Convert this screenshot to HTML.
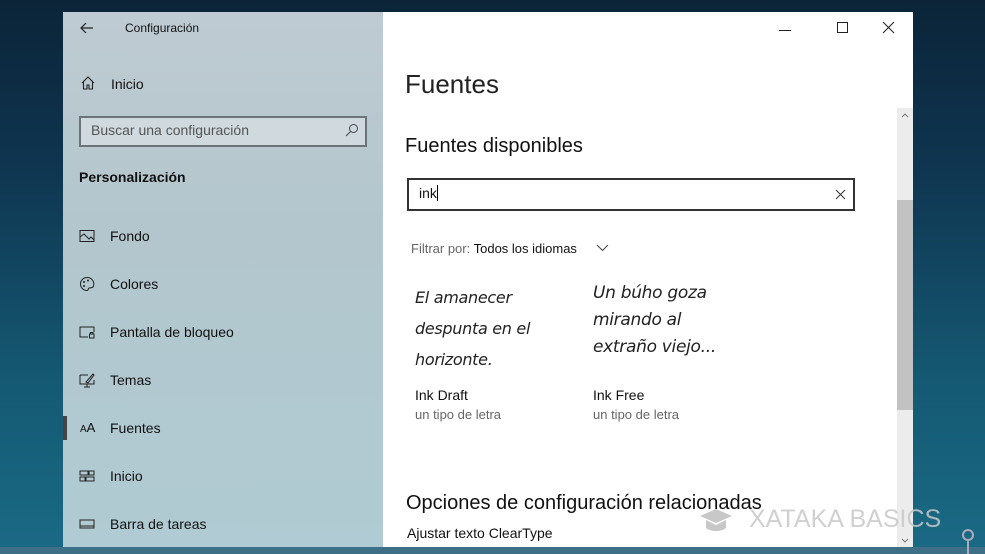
<!DOCTYPE html>
<html><head><meta charset="utf-8"><style>
*{margin:0;padding:0;box-sizing:border-box}
html,body{width:985px;height:554px;overflow:hidden}
body{position:relative;font-family:"Liberation Sans",sans-serif;
background:linear-gradient(180deg,#0b2438 0%,#0f3550 30%,#155a74 70%,#1a6a85 100%);}
.win{position:absolute;left:63px;top:12px;width:850px;height:535px;}
.left{position:absolute;left:0;top:0;width:320px;height:535px;background:linear-gradient(180deg,#bfcbd2 0%,#b3c6cd 40%,#b0cbd3 100%);color:#111}
.right{position:absolute;left:320px;top:0;width:530px;height:535px;background:#fff;color:#111}
.t{position:absolute;white-space:nowrap}
.nav{position:absolute;left:16px;font-size:14px;white-space:nowrap}
.nav svg{position:absolute;left:0;top:0}
.nav span{position:absolute;left:31px;top:0px;white-space:nowrap}
.hw{font-family:"DejaVu Sans",sans-serif;font-style:italic;font-size:16px;line-height:31px;color:#222;letter-spacing:-0.3px}
</style></head><body>
<div class="win">
 <div class="left">
  <svg class="t" style="left:16px;top:8px" width="16" height="16" viewBox="0 0 16 16"><path d="M14 8H2M7 3L2 8l5 5" stroke="#222" stroke-width="1.2" fill="none"/></svg>
  <div class="t" style="left:62px;top:9px;font-size:12px">Configuración</div>
  <svg class="t" style="left:17px;top:63px" width="16" height="16" viewBox="0 0 16 16"><path d="M2 8L8 2l6 6M3.5 6.5V14h3.5v-4h2v4h3.5V6.5" stroke="#222" stroke-width="1.1" fill="none"/></svg>
  <div class="t" style="left:48px;top:64px;font-size:14px">Inicio</div>
  <div class="t" style="left:16px;top:104px;width:288px;height:31px;border:2px solid #6c7479;background:#cfd9de"></div>
  <div class="t" style="left:28px;top:110px;font-size:14px;color:#555">Buscar una configuración</div>
  <svg class="t" style="left:282px;top:111px" width="14" height="14" viewBox="0 0 14 14"><circle cx="8.5" cy="5.5" r="4" stroke="#444" fill="none"/><path d="M5.5 8.5L1 13" stroke="#444"/></svg>
  <div class="t" style="left:16px;top:157px;font-size:14px;font-weight:bold">Personalización</div>
  <div class="nav" style="top:216px"><svg width="16" height="16" viewBox="0 0 16 16"><rect x="1" y="2.5" width="14" height="11" stroke="#222" fill="none"/><path d="M1 9l4-3 5 5 2-2 3 3" stroke="#222" fill="none"/></svg><span>Fondo</span></div>
  <div class="nav" style="top:264px"><svg width="16" height="16" viewBox="0 0 16 16"><path d="M8 1.5a6.5 6.5 0 1 0 0 13c1.5 0 1-2 2-2.5s4 .5 4.5-2A6.5 6.5 0 0 0 8 1.5z" stroke="#222" fill="none"/><circle cx="5" cy="6" r="1" fill="#222"/><circle cx="9" cy="4.5" r="1" fill="#222"/><circle cx="5" cy="10" r="1" fill="#222"/></svg><span>Colores</span></div>
  <div class="nav" style="top:312px"><svg width="16" height="16" viewBox="0 0 16 16"><path d="M9 13H1V3h14v5" stroke="#222" fill="none"/><rect x="10.5" y="10" width="4.5" height="4" stroke="#222" fill="none"/><path d="M11.5 10V8.5h2.5V10" stroke="#222" fill="none"/></svg><span>Pantalla de bloqueo</span></div>
  <div class="nav" style="top:360px"><svg width="16" height="16" viewBox="0 0 16 16"><path d="M1 3h8M1 3v9h14V8M5 15h6M8 12v3" stroke="#222" fill="none"/><path d="M7 10l7-8 1 1-6 8z" stroke="#222" fill="none"/></svg><span>Temas</span></div>
  <div class="t" style="left:0;top:404px;width:4px;height:24px;background:#444"></div>
  <div class="nav" style="top:408px"><div class="t" style="left:1px;top:0;font-size:10px">A<span style="position:static;font-size:13px">A</span></div><span>Fuentes</span></div>
  <div class="nav" style="top:456px"><svg width="16" height="16" viewBox="0 0 16 16"><rect x="1" y="3" width="8" height="4" stroke="#222" fill="none"/><rect x="10" y="3" width="5" height="4" stroke="#222" fill="none"/><rect x="1" y="9" width="5" height="4" stroke="#222" fill="none"/><rect x="7" y="9" width="8" height="4" stroke="#222" fill="none"/></svg><span>Inicio</span></div>
  <div class="nav" style="top:504px"><svg width="16" height="16" viewBox="0 0 16 16"><rect x="1" y="4" width="14" height="8" stroke="#222" fill="none"/><path d="M1 10h14" stroke="#222"/></svg><span>Barra de tareas</span></div>
 </div>
 <div class="right">
  <div class="t" style="left:396px;top:18px;width:12px;height:1px;background:#222"></div>
  <div class="t" style="left:454px;top:10px;width:11px;height:11px;border:1px solid #222"></div>
  <svg class="t" style="left:499px;top:9px" width="13" height="13" viewBox="0 0 13 13"><path d="M1 1l11 11M12 1L1 12" stroke="#222"/></svg>
  <div class="t" style="left:22px;top:57px;font-size:26px;color:#222">Fuentes</div>
  <div class="t" style="left:22px;top:123px;font-size:20px">Fuentes disponibles</div>
  <div class="t" style="left:24px;top:166px;width:448px;height:33px;border:2px solid #333"></div>
  <div class="t" style="left:36px;top:173px;font-size:14px">ink<span style="display:inline-block;width:1px;height:16px;background:#000;vertical-align:-3px"></span></div>
  <svg class="t" style="left:452px;top:177px" width="11" height="11" viewBox="0 0 11 11"><path d="M1 1l9 9M10 1L1 10" stroke="#333"/></svg>
  <div class="t" style="left:28px;top:229px;font-size:13px;color:#666">Filtrar por: <span style="color:#111">Todos los idiomas</span></div>
  <svg class="t" style="left:213px;top:232px" width="13" height="8" viewBox="0 0 13 8"><path d="M1 1l5.5 5.5L12 1" stroke="#444" fill="none"/></svg>
  <div class="t hw" style="left:32px;top:270px">El amanecer<br>despunta en el<br>horizonte.</div>
  <div class="t hw" style="left:210px;top:268px;font-size:17px;line-height:27px">Un búho goza<br>mirando al<br>extraño viejo...</div>
  <div class="t" style="left:32px;top:375px;font-size:14px">Ink Draft</div>
  <div class="t" style="left:32px;top:395px;font-size:13px;color:#666">un tipo de letra</div>
  <div class="t" style="left:210px;top:375px;font-size:14px">Ink Free</div>
  <div class="t" style="left:210px;top:395px;font-size:13px;color:#666">un tipo de letra</div>
  <div class="t" style="left:23px;top:480px;font-size:20px">Opciones de configuración relacionadas</div>
  <div class="t" style="left:24px;top:513px;font-size:14px">Ajustar texto ClearType</div>
  <div class="t" style="left:514px;top:96px;width:16px;height:439px;background:#ececec"></div>
  <div class="t" style="left:514px;top:188px;width:16px;height:210px;background:#c2c2c2"></div>
  <svg class="t" style="left:518px;top:100px" width="8" height="6" viewBox="0 0 8 6"><path d="M1 5l3-3 3 3" stroke="#777" fill="none"/></svg>
  <svg class="t" style="left:518px;top:526px" width="8" height="6" viewBox="0 0 8 6"><path d="M1 1l3 3 3-3" stroke="#777" fill="none"/></svg>
 </div>
</div>
<div class="t" style="left:0;top:547px;width:985px;height:7px;background:#3d6f86"></div>
<svg class="t" style="left:698px;top:506px" width="36" height="30" viewBox="0 0 36 30"><path d="M2 10L18 3l16 7-16 7z" fill="#c8c8c8"/><path d="M8 14v8c5 4 15 4 20 0v-8l-10 5z" fill="#c8c8c8"/></svg>
<div class="t" style="left:749px;top:505px;font-size:25px;color:rgba(200,200,200,.85)">XATAKA BASICS</div>
<svg class="t" style="left:958px;top:526px" width="20" height="28" viewBox="0 0 20 28"><circle cx="10" cy="9" r="5" stroke="#aab" stroke-width="2" fill="none"/><path d="M10 14v14" stroke="#aab" stroke-width="2"/></svg>
</body></html>
